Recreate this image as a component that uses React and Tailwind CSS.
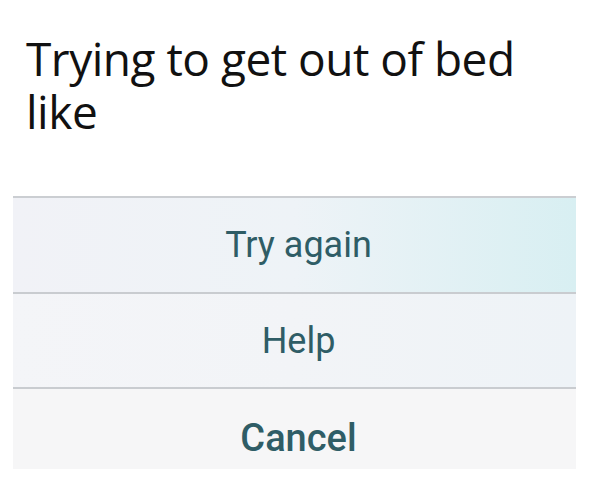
import React from "react";

const options = [
  { label: "Try again", text: "text-[36px] font-normal", row: "h-[94px] bg-gradient-to-r from-[#f1f2f7] via-[#eef3f7] to-[#d8eff2]" },
  { label: "Help", text: "text-[36px] font-normal", row: "h-[95px] bg-gradient-to-r from-[#f4f5f8] via-[#f2f4f7] to-[#eef3f7]" },
  { label: "Cancel", text: "text-[38px] font-medium", row: "h-[82px] bg-[#f6f6f7]" },
];

export default function App() {
  return (
    <div className="w-[597px] h-[487px] bg-white overflow-hidden">
      <h1
        className="pl-[26px] pt-[32px] pr-6 text-[46px] leading-[53px] tracking-[-0.5px] text-[#111] font-normal"
        style={{ fontFamily: '"Open Sans", "Noto Sans", sans-serif' }}
      >
        Trying to get out of bed like
      </h1>

      <div className="mt-[58px] ml-[13px] w-[563px] border-t-2 border-[#cbced2]">
        {options.map((opt, i) => (
          <div
            key={opt.label}
            className={`${opt.row} ${i > 0 ? "border-t-2 border-[#c9ccd0]" : ""} flex justify-center pl-2 ${
              i === 2 ? "items-start pt-[30px]" : "items-center"
            }`}
          >
            <span
              className={`leading-none text-[#2f5d66] ${opt.text}`}
              style={{ fontFamily: "Roboto, sans-serif" }}
            >
              {opt.label}
            </span>
          </div>
        ))}
      </div>
    </div>
  );
}
